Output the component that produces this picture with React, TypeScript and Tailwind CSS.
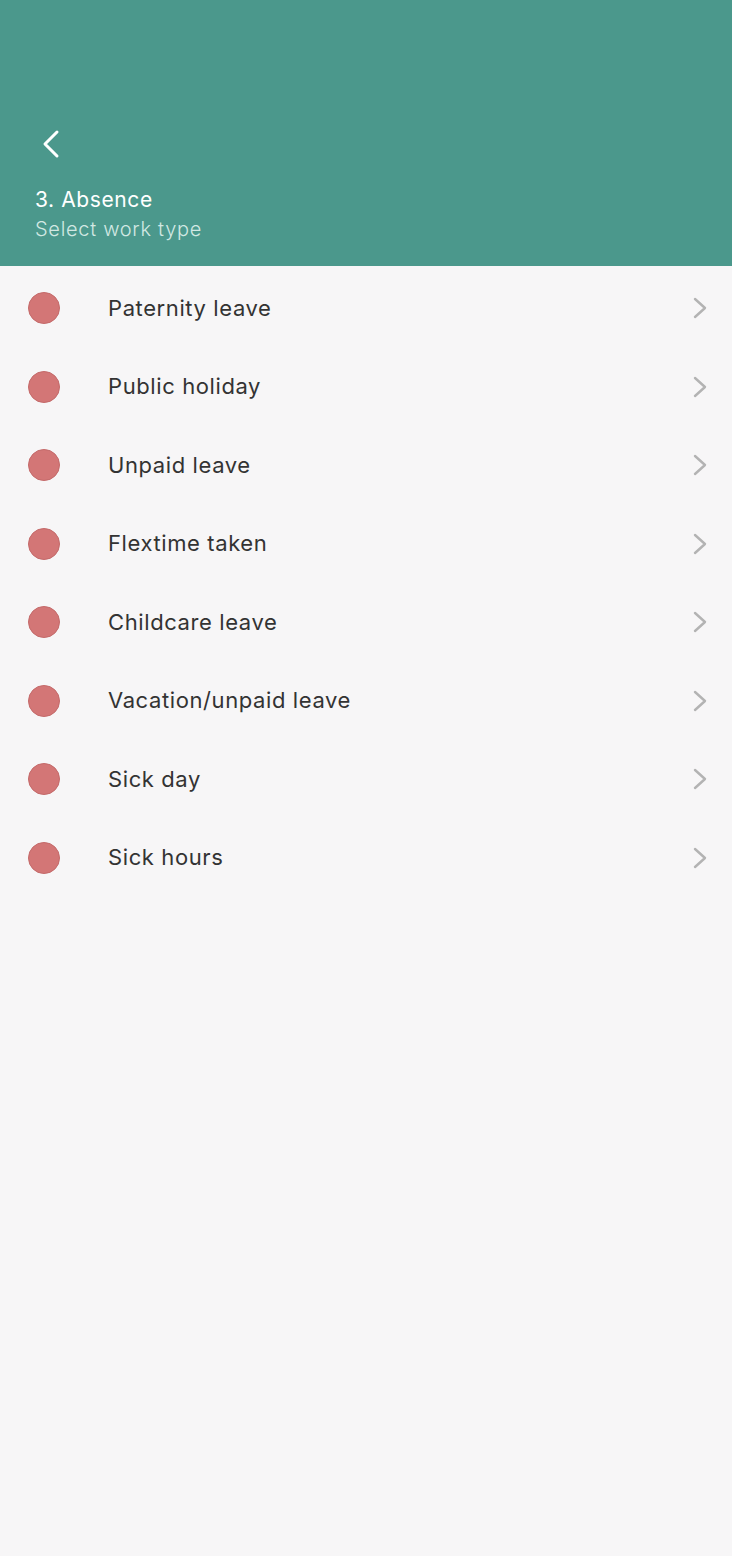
import React from 'react';

const items = [
    'Paternity leave',
    'Public holiday',
    'Unpaid leave',
    'Flextime taken',
    'Childcare leave',
    'Vacation/unpaid leave',
    'Sick day',
    'Sick hours',
];

export default function App() {
    return (
        <div
            className="min-h-[1556px] bg-[#f7f6f7]"
            style={{ fontFamily: 'Inter, "Noto Sans", sans-serif' }}
        >
            {/* Header */}
            <header className="h-[266px] bg-[#4b988c] px-[35px] pt-[128px]">
                <button className="flex h-[32px] w-[32px] items-center text-white">
                    <svg width="20" height="30" viewBox="0 0 20 30" fill="none" className="ml-[6px]">
                        <path d="M16 3 L4 15 L16 27" stroke="white" strokeWidth="3" strokeLinecap="round" strokeLinejoin="round" />
                    </svg>
                </button>
                <h1 className="mt-[26px] text-[21px] leading-[28px] tracking-[0.6px] text-white">3. Absence</h1>
                <p className="mt-[1px] text-[20px] font-light leading-[28px] tracking-[0.7px] text-[#d2e8e3]">Select work type</p>
            </header>

            {/* List */}
            <ul className="pt-[3px]">
                {items.map((item) => (
                    <li key={item} className="flex h-[78.5px] items-center pl-[28px] pr-[24px]">
                        <span className="h-[32px] w-[32px] shrink-0 rounded-full border border-[#c46a6a] bg-[#d37676]" />
                        <span className="ml-[48px] flex-1 text-[22px] tracking-[0.6px] text-[#333333]">{item}</span>
                        <svg width="16" height="24" viewBox="0 0 16 24" fill="none">
                            <path d="M3 3 L13 12 L3 21" stroke="#b3b3b3" strokeWidth="2.4" strokeLinecap="round" strokeLinejoin="round" />
                        </svg>
                    </li>
                ))}
            </ul>
        </div>
    );
}
